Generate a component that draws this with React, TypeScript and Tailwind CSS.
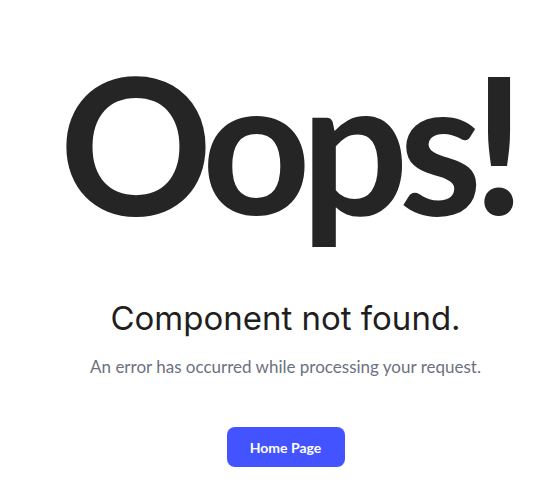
export default function App() {
  return (
    <div className="min-h-[484px] w-full bg-white pl-[12px] flex flex-col items-center">
      <h1 className="mt-[31px] pl-[4px] text-[190px] leading-[220px] font-bold tracking-[-10px] text-[#252525] font-['Lato',sans-serif]">
        Oops!
      </h1>
      <h2 className="mt-[47px] text-[33px] leading-[40px] font-normal text-[#1f1f1f] font-['Inter',sans-serif]">
        Component not found.
      </h2>
      <p className="mt-[17px] text-[17px] leading-[24px] text-[#6b7280] font-['Lato',sans-serif]">
        An error has occurred while processing your request.
      </p>
      <button
        type="button"
        className="mt-[48px] w-[118px] h-[40px] rounded-lg bg-[#4353ff] text-white text-[14px] font-bold font-['Lato',sans-serif]"
      >
        Home Page
      </button>
    </div>
  );
}
